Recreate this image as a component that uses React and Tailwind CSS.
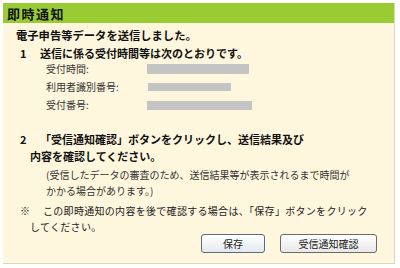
export default function App() {
    const font = { fontFamily: '"Noto Sans CJK JP", "Noto Sans", sans-serif' };

    return (
        <div className="w-[400px] h-[268px] bg-white p-[3px]" style={font}>
            <div className="w-[392px] h-[261px] bg-[#fff7dd] border-r border-b border-[#d9d6c6] flex flex-col">
                {/* ヘッダー */}
                <div className="h-[20px] bg-[#99cc33] flex items-center pl-[4px] text-[13px] font-bold text-[#111] leading-none tracking-[1.5px]">
                    即時通知
                </div>

                <div className="flex flex-col pl-[13px] pr-[8px] text-[#111]">
                    <div className="mt-[3px] text-[11.3px] font-bold leading-[18px]">
                        電子申告等データを送信しました。
                    </div>

                    <div className="flex text-[11px] font-bold leading-[18px]">
                        <span className="w-[24px] pl-[4px]">1</span>
                        <span>送信に係る受付時間等は次のとおりです。</span>
                    </div>

                    <div className="mt-[-2px] flex flex-col pl-[30px] text-[10px] text-[#333] leading-[18px]">
                        <div className="flex items-center">
                            <span className="w-[101px]">受付時間:</span>
                            <span className="w-[102px] h-[10px] bg-[#c4c4c4]" />
                        </div>
                        <div className="flex items-center">
                            <span className="w-[102px]">利用者識別番号:</span>
                            <span className="w-[83px] h-[8px] bg-[#c4c4c4]" />
                        </div>
                        <div className="flex items-center">
                            <span className="w-[101px]">受付番号:</span>
                            <span className="w-[105px] h-[9px] bg-[#c4c4c4]" />
                        </div>
                    </div>

                    <div className="mt-[17px] flex text-[11px] font-bold leading-[17px]">
                        <span className="w-[24px] pl-[4px] shrink-0">2</span>
                        <span>「受信通知確認」ボタンをクリックし、送信結果及び</span>
                    </div>
                    <div className="pl-[14px] text-[11px] font-bold leading-[17px]">内容を確認してください。</div>

                    <div className="pl-[30px] mt-[2px] text-[10px] text-[#333] leading-[16px]">
                        <div>(受信したデータの審査のため、送信結果等が表示されるまで時間が</div>
                        <div>かかる場合があります。)</div>
                    </div>

                    <div className="mt-[4px] flex text-[10px] text-[#222] leading-[16px] tracking-[0.3px]">
                        <span className="w-[27px] pl-[4px] shrink-0">※</span>
                        <span>この即時通知の内容を後で確認する場合は、「保存」ボタンをクリック</span>
                    </div>
                    <div className="pl-[14px] text-[10px] text-[#222] leading-[16px] tracking-[0.3px]">してください。</div>

                    <div className="flex justify-end gap-[15px] pr-[9px] mt-[-1px]">
                        <button className="w-[64px] h-[19px] rounded-[3px] border border-[#5a6a80] bg-gradient-to-b from-white to-[#e4e8ee] text-[10px] text-[#222] leading-none">
                            保存
                        </button>
                        <button className="w-[97px] h-[19px] rounded-[3px] border border-[#6a6a6a] bg-gradient-to-b from-white to-[#e8e8e8] text-[10px] text-[#222] leading-none">
                            受信通知確認
                        </button>
                    </div>
                </div>
            </div>
        </div>
    );
}
